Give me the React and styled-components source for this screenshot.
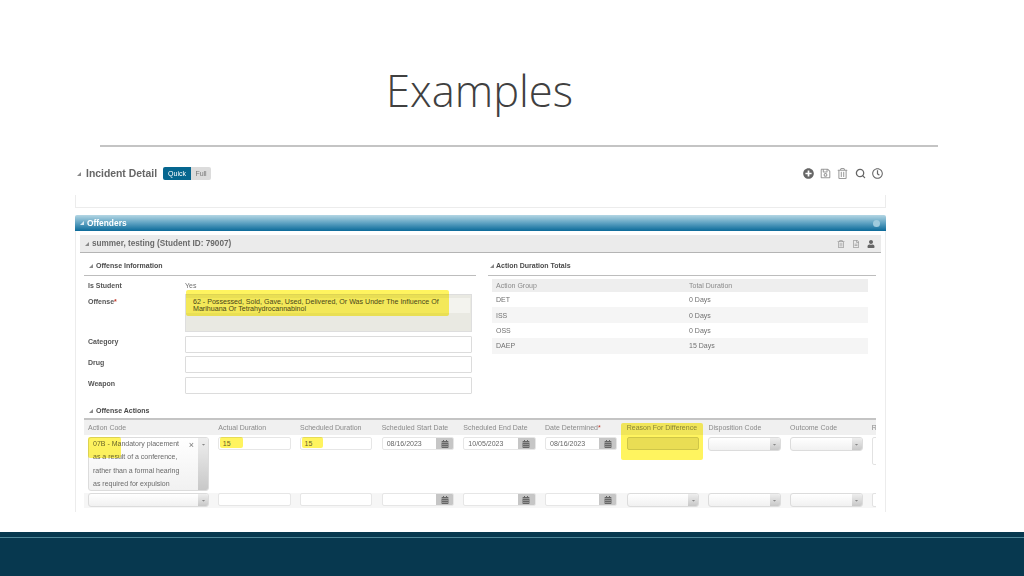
import React from "react";
import styled, { createGlobalStyle } from "styled-components";
import { Search } from "lucide-react";
import {
  FaPlusCircle,
  FaRegSave,
  FaRegTrashAlt,
  FaRegClock,
  FaRegFileAlt,
  FaUser,
  FaCalendarAlt,
  FaCaretDown,
} from "react-icons/fa";

const GlobalStyle = createGlobalStyle`
  html, body {
    margin: 0;
    padding: 0;
    background: #ffffff;
  }
  * {
    box-sizing: border-box;
  }
`;

const Slide = styled.div`
  width: 1024px;
  height: 576px;
  display: flex;
  flex-direction: column;
  overflow: hidden;
  background: #ffffff;
`;

const TitleBar = styled.div`
  height: 145px;
  padding: 63px 0 0 386px;
`;

const Title = styled.h1`
  margin: 0;
  font-family: "Open Sans", sans-serif;
  font-weight: 300;
  font-size: 43.5px;
  line-height: 56px;
  color: #404040;
`;

const Rule = styled.div`
  height: 2px;
  margin: 0 86px 0 100px;
  background: #c4c4c4;
`;

const Capture = styled.div`
  width: 811px;
  height: 352px;
  margin: 13px 0 0 75px;
  overflow: hidden;
  font-family: "Liberation Sans", Arial, sans-serif;
  font-size: 7px;
  color: #707070;
  filter: blur(0.5px);
`;

const Arrow = styled.span`
  flex: none;
  width: 0;
  height: 0;
  margin-right: ${(p) => p.$gap || 4}px;
  border-style: solid;
  border-width: 0 0 ${(p) => p.$size || 4}px ${(p) => p.$size || 4}px;
  border-color: transparent transparent ${(p) => p.$color || "#8a8a8a"} transparent;
`;

const DetailBar = styled.div`
  height: 20px;
  padding: 7px 3px 0 2px;
  display: flex;
  align-items: center;
`;

const DetailTitle = styled.span`
  margin-right: 6px;
  font-size: 10.4px;
  font-weight: bold;
  color: #666666;
`;

const Toggle = styled.div`
  display: flex;
  height: 13px;
`;

const ToggleButton = styled.span`
  display: flex;
  align-items: center;
  justify-content: center;
  width: ${(p) => (p.$active ? 28 : 20)}px;
  font-size: 7px;
  border-radius: ${(p) => (p.$active ? "2px 0 0 2px" : "0 2px 2px 0")};
  color: ${(p) => (p.$active ? "#ffffff" : "#777777")};
  background: ${(p) => (p.$active ? "#05668f" : "#dcdcdc")};
`;

const ToolIcons = styled.div`
  margin-left: auto;
  display: flex;
  align-items: center;
  gap: 6.3px;
  font-size: 11px;
  color: #666666;
  svg:nth-child(2),
  svg:nth-child(3) {
    color: #9a9a9a;
  }
`;

const EmptyPanel = styled.div`
  height: 13px;
  margin-top: 15px;
  border: 1px solid #ececec;
  border-top: none;
`;

const OffendersHead = styled.div`
  height: 16px;
  margin-top: 7px;
  padding: 0 6px 0 5px;
  display: flex;
  align-items: center;
  border-radius: 2px 2px 0 0;
  font-size: 8.4px;
  font-weight: bold;
  color: #ffffff;
  background: linear-gradient(#b4d6e4, #5ea2c2 50%, #0b6a99);
`;

const HeadDot = styled.span`
  margin-left: auto;
  width: 7px;
  height: 7px;
  border-radius: 50%;
  background: #9fcbdd;
`;

const OffendersBody = styled.div`
  height: 281px;
  padding: 4px 4px 0;
  border-left: 1px solid #ececec;
  border-right: 1px solid #ececec;
`;

const StudentBar = styled.div`
  height: 18px;
  padding: 0 6px 0 5px;
  display: flex;
  align-items: center;
  font-size: 8.2px;
  font-weight: bold;
  color: #6a6a6a;
  background: #ebebeb;
  border-bottom: 1px solid #b4b4b4;
`;

const StudentIcons = styled.div`
  margin-left: auto;
  display: flex;
  align-items: center;
  gap: 7px;
  font-size: 8px;
  color: #a0a0a0;
  svg:last-child {
    color: #666666;
  }
`;

const Columns = styled.div`
  display: flex;
  gap: 12px;
  margin: 9px 0 0 4px;
`;

const Column = styled.div`
  width: ${(p) => p.$width}px;
`;

const SectionHead = styled.div`
  height: 14px;
  padding: 0 0 6px ${(p) => p.$left ?? 5}px;
  display: flex;
  align-items: center;
  font-size: 7px;
  font-weight: bold;
  color: #4a4a4a;
  border-bottom: 1px solid #bdbdbd;
`;

const FormRow = styled.div`
  display: grid;
  grid-template-columns: 97px 287px;
  padding-left: 4px;
  margin-top: ${(p) => p.$top ?? 3.7}px;
`;

const Label = styled.div`
  padding-top: ${(p) => p.$top ?? 1.5}px;
  font-weight: bold;
  color: #555555;
  line-height: 9px;
`;

const Required = styled.span`
  color: #c0392b;
`;

const PlainValue = styled.div`
  padding-top: 2px;
  line-height: 9px;
`;

const OffenseField = styled.div`
  position: relative;
  height: 38px;
  padding: 3px 1px 0 0;
  border: 1px solid #dedede;
  background: #e9e9e2;
`;

const OffenseValue = styled.div`
  height: 15px;
  padding: 1px 0 0 7px;
  line-height: 6.6px;
  font-size: 7.1px;
  color: #4a4a4a;
  background: #f3f3ee;
`;

const TextField = styled.div`
  height: 17px;
  border: 1px solid #dcdcdc;
  border-radius: 1px;
  background: #ffffff;
`;

const Highlight = styled.span`
  position: absolute;
  left: ${(p) => p.$left}px;
  top: ${(p) => p.$top}px;
  width: ${(p) => p.$w}px;
  height: ${(p) => p.$h}px;
  border-radius: 2px;
  background: #fff34d;
  mix-blend-mode: multiply;
  opacity: 0.9;
  pointer-events: none;
`;

const TotalsRow = styled.div`
  display: grid;
  grid-template-columns: 193px 1fr;
  height: ${(p) => p.$h || 15.4}px;
  margin-right: 8px;
  margin-left: 4px;
  padding-left: 4px;
  align-items: center;
  background: ${(p) => (p.$shade ? "#f5f5f5" : "#ffffff")};
`;

const TotalsHead = styled(TotalsRow)`
  margin-top: 3px;
  color: #8a8a8a;
  background: #eeeeee;
`;

const ActionsHead = styled(SectionHead)`
  margin: 10px 0 0 4px;
  height: 16px;
  padding-bottom: 1px;
  border-bottom: 2px solid #c4c4c4;
  width: 792px;
`;

const ActionsTable = styled.div`
  width: 792px;
  margin-left: 4px;
  overflow: hidden;
`;

const TableRow = styled.div`
  display: grid;
  grid-template-columns: 121px repeat(9, 72.4px);
  column-gap: 9.3px;
  padding-left: 4px;
  width: 1000px;
  background: ${(p) => p.$bg || "transparent"};
  height: ${(p) => p.$h}px;
  margin-top: ${(p) => p.$top || 0}px;
  align-items: ${(p) => (p.$center ? "center" : "start")};
`;

const HeadCell = styled.div`
  position: relative;
  white-space: nowrap;
  color: #8a8a8a;
`;

const Cell = styled.div`
  position: relative;
`;

const InputBox = styled.div`
  height: 13px;
  padding-left: 3.5px;
  line-height: 11px;
  border: 1px solid ${(p) => (p.$marked ? "#cfcfc0" : "#e6e6e6")};
  border-radius: 2px;
  background: ${(p) => (p.$marked ? "#e9e7e0" : "#ffffff")};
  color: #666666;
`;

const DateBox = styled.div`
  display: flex;
  height: 13px;
  border: 1px solid #e6e6e6;
  border-radius: 2px;
  background: #ffffff;
  overflow: hidden;
`;

const DateText = styled.span`
  flex: 1;
  padding-left: 4px;
  line-height: 11px;
  color: #666666;
`;

const CalendarButton = styled.span`
  width: 17px;
  display: flex;
  align-items: center;
  justify-content: center;
  font-size: 8px;
  color: #666666;
  background: #c6c6c6;
`;

const SelectBox = styled.div`
  position: relative;
  display: flex;
  justify-content: flex-end;
  height: ${(p) => p.$h || 14}px;
  border: 1px solid #dcdcdc;
  border-radius: 3px;
  background: linear-gradient(#ffffff, #f1f1f1);
  overflow: hidden;
`;

const SelectCap = styled.span`
  width: 10px;
  display: flex;
  align-items: ${(p) => (p.$tall ? "flex-start" : "center")};
  justify-content: center;
  padding-top: ${(p) => (p.$tall ? 4 : 0)}px;
  font-size: 5px;
  color: #888888;
  background: linear-gradient(#eeeeee, #c8c8c8);
`;

const CodeText = styled.div`
  position: absolute;
  left: 4px;
  top: -1px;
  width: 92px;
  line-height: 13.3px;
  font-size: 7px;
  color: #6a6a6a;
`;

const ClearMark = styled.span`
  position: absolute;
  right: 14px;
  top: 1px;
  font-size: 9px;
  line-height: 12px;
  color: #777777;
`;

const ClippedBox = styled.div`
  height: ${(p) => p.$h}px;
  border: 1px solid #e2e2e2;
  border-radius: 2px;
  background: #ffffff;
`;

const Footer = styled.div`
  height: 44px;
  margin-top: auto;
  padding-top: 5px;
  background: #07384f;
`;

const FooterLine = styled.div`
  height: 1px;
  background: #4f8799;
`;

const ACTION_HEADS = [
  "Action Code",
  "Actual Duration",
  "Scheduled Duration",
  "Scheduled Start Date",
  "Scheduled End Date",
  "Date Determined",
  "Reason For Difference",
  "Disposition Code",
  "Outcome Code",
  "R",
];

const TOTALS = [
  ["DET", "0 Days"],
  ["ISS", "0 Days"],
  ["OSS", "0 Days"],
  ["DAEP", "15 Days"],
];

const DateInput = ({ value }) => (
  <DateBox>
    <DateText>{value}</DateText>
    <CalendarButton>
      <FaCalendarAlt />
    </CalendarButton>
  </DateBox>
);

const Select = ({ h }) => (
  <SelectBox $h={h}>
    <SelectCap>
      <FaCaretDown />
    </SelectCap>
  </SelectBox>
);

const App = () => {
  return (
    <>
      <GlobalStyle />
      <Slide>
        <TitleBar>
          <Title>Examples</Title>
        </TitleBar>
        <Rule />
        <Capture>
          <DetailBar>
            <Arrow $gap={5} />
            <DetailTitle>Incident Detail</DetailTitle>
            <Toggle>
              <ToggleButton $active>Quick</ToggleButton>
              <ToggleButton>Full</ToggleButton>
            </Toggle>
            <ToolIcons>
              <FaPlusCircle />
              <FaRegSave />
              <FaRegTrashAlt />
              <Search size={11} strokeWidth={2.8} />
              <FaRegClock />
            </ToolIcons>
          </DetailBar>
          <EmptyPanel />
          <OffendersHead>
            <Arrow $color="#d7e9f1" $gap={3} />
            Offenders
            <HeadDot />
          </OffendersHead>
          <OffendersBody>
            <StudentBar>
              <Arrow $gap={3} />
              summer, testing (Student ID: 79007)
              <StudentIcons>
                <FaRegTrashAlt />
                <FaRegFileAlt />
                <FaUser />
              </StudentIcons>
            </StudentBar>
            <Columns>
              <Column $width={392}>
                <SectionHead>
                  <Arrow $gap={3} />
                  Offense Information
                </SectionHead>
                <FormRow $top={3}>
                  <Label $top={2}>Is Student</Label>
                  <PlainValue>Yes</PlainValue>
                </FormRow>
                <FormRow $top={4}>
                  <Label $top={2.5}>
                    Offense<Required>*</Required>
                  </Label>
                  <OffenseField>
                    <OffenseValue>
                      62 - Possessed, Sold, Gave, Used, Delivered, Or Was Under The Influence Of Marihuana Or
                      Tetrahydrocannabinol
                    </OffenseValue>
                    <Highlight $left={0} $top={-5} $w={263} $h={26} />
                  </OffenseField>
                </FormRow>
                <FormRow>
                  <Label>Category</Label>
                  <TextField />
                </FormRow>
                <FormRow>
                  <Label>Drug</Label>
                  <TextField />
                </FormRow>
                <FormRow>
                  <Label>Weapon</Label>
                  <TextField />
                </FormRow>
              </Column>
              <Column $width={388}>
                <SectionHead $left={2}>
                  <Arrow $gap={2} />
                  Action Duration Totals
                </SectionHead>
                <TotalsHead $h={13}>
                  <span>Action Group</span>
                  <span>Total Duration</span>
                </TotalsHead>
                {TOTALS.map(([group, days], i) => (
                  <TotalsRow key={group} $shade={i % 2 === 1}>
                    <span>{group}</span>
                    <span>{days}</span>
                  </TotalsRow>
                ))}
              </Column>
            </Columns>
            <ActionsHead>
              <Arrow $gap={3} />
              Offense Actions
            </ActionsHead>
            <ActionsTable>
              <TableRow $h={15} $bg="#f0f0f0" $center>
                {ACTION_HEADS.map((head) => (
                  <HeadCell key={head}>
                    {head}
                    {head === "Date Determined" && <Required>*</Required>}
                    {head === "Reason For Difference" && <Highlight $left={-6} $top={-1} $w={82} $h={37} />}
                  </HeadCell>
                ))}
              </TableRow>
              <TableRow $h={55} $top={2}>
                <Cell>
                  <SelectBox $h={54}>
                    <CodeText>
                      07B - Mandatory placement as a result of a conference, rather than a formal hearing as
                      required for expulsion
                    </CodeText>
                    <ClearMark>×</ClearMark>
                    <SelectCap $tall>
                      <FaCaretDown />
                    </SelectCap>
                  </SelectBox>
                  <Highlight $left={0} $top={0} $w={33} $h={21} />
                </Cell>
                <Cell>
                  <InputBox>15</InputBox>
                  <Highlight $left={2} $top={0} $w={23} $h={11} />
                </Cell>
                <Cell>
                  <InputBox>15</InputBox>
                  <Highlight $left={2} $top={0} $w={21} $h={11} />
                </Cell>
                <DateInput value="08/16/2023" />
                <DateInput value="10/05/2023" />
                <DateInput value="08/16/2023" />
                <InputBox $marked />
                <Select />
                <Select />
                <ClippedBox $h={28} />
              </TableRow>
              <TableRow $h={15} $bg="#f6f6f6" $top={1}>
                <Select />
                <InputBox />
                <InputBox />
                <DateInput />
                <DateInput />
                <DateInput />
                <Select />
                <Select />
                <Select />
                <ClippedBox $h={14} />
              </TableRow>
            </ActionsTable>
          </OffendersBody>
        </Capture>
        <Footer>
          <FooterLine />
        </Footer>
      </Slide>
    </>
  );
};

export default App;
